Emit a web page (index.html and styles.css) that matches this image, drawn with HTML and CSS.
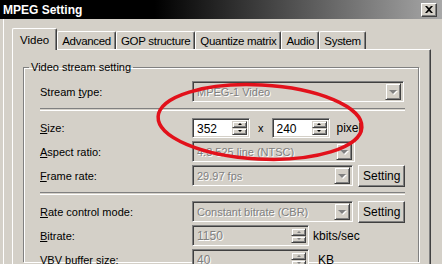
FILE: index.html
```html
<!DOCTYPE html>
<html lang="en">
<head>
    <meta charset="UTF-8">
    <title>MPEG Setting</title>
    <link rel="stylesheet" href="styles.css">
</head>
<body>
    <div class="titlebar">
        <span class="title">MPEG Setting</span>
        <div class="close">
            <svg width="8" height="7" viewBox="0 0 8 7"><path d="M0 0h2l2 2 2-2h2L5 3.5 8 7H6L4 5 2 7H0l3-3.5z" fill="#000"/></svg>
        </div>
    </div>

    <div class="client">
        <!-- tab strip -->
        <div class="tabs">
            <div class="tab active">Video</div>
            <div class="tab">Advanced</div>
            <div class="tab">GOP structure</div>
            <div class="tab">Quantize matrix</div>
            <div class="tab">Audio</div>
            <div class="tab">System</div>
        </div>

        <div class="panel">
            <fieldset class="group">
                <legend>Video stream setting</legend>
                <div class="group-body">
                    <div class="row">
                        <span class="lbl">Stream <u>t</u>ype:</span>
                        <div class="combo wide"><span class="value">MPEG-1 Video</span><span class="drop"><i class="arrow"></i></span></div>
                    </div>
                    <div class="sep"></div>
                    <div class="row">
                        <span class="lbl"><u>S</u>ize:</span>
                        <div class="spin size"><span class="value">352</span><span class="updown"><b><i class="up"></i></b><b><i class="down"></i></b></span></div>
                        <span class="times">x</span>
                        <div class="spin size"><span class="value">240</span><span class="updown"><b><i class="up"></i></b><b><i class="down"></i></b></span></div>
                        <span class="unit pixel">pixel</span>
                    </div>
                    <div class="row">
                        <span class="lbl"><u>A</u>spect ratio:</span>
                        <div class="combo"><span class="value">4:3 525 line (NTSC)</span><span class="drop"><i class="arrow"></i></span></div>
                    </div>
                    <div class="row">
                        <span class="lbl"><u>F</u>rame rate:</span>
                        <div class="combo"><span class="value">29.97 fps</span><span class="drop"><i class="arrow"></i></span></div>
                        <div class="btn">Setting</div>
                    </div>
                    <div class="sep"></div>
                    <div class="row">
                        <span class="lbl"><u>R</u>ate control mode:</span>
                        <div class="combo"><span class="value">Constant bitrate (CBR)</span><span class="drop"><i class="arrow"></i></span></div>
                        <div class="btn">Setting</div>
                    </div>
                    <div class="row">
                        <span class="lbl"><u>B</u>itrate:</span>
                        <div class="spin long disabled"><span class="value">1150</span><span class="updown"><b><i class="up"></i></b><b><i class="down"></i></b></span></div>
                        <span class="unit">kbits/sec</span>
                    </div>
                    <div class="row">
                        <span class="lbl"><u>V</u>BV buffer size:</span>
                        <div class="spin long disabled"><span class="value">40</span><span class="updown"><b><i class="up"></i></b><b><i class="down"></i></b></span></div>
                        <span class="unit kb">KB</span>
                    </div>
                </div>
            </fieldset>
        </div>
    </div>

    <!-- red hand-drawn mark over the size fields -->
    <svg class="mark" width="442" height="264" viewBox="0 0 442 264">
        <ellipse cx="260" cy="122" rx="102" ry="37" transform="rotate(3 260 122)" fill="none" stroke="#e2111b" stroke-width="3.5"/>
    </svg>
</body>
</html>
```

FILE: styles.css
```css
body {
    margin: 0;
    width: 442px;
    height: 264px;
    overflow: hidden;
    position: relative;
    background-color: #d4d0c8;
    font-family: "Liberation Sans", Arial, sans-serif;
    font-size: 11px;
    color: #000;
}

.titlebar {
    height: 19px;
    display: flex;
    align-items: center;
    justify-content: space-between;
    padding: 0 5px 0 3px;
    background: linear-gradient(to right, #000 35%, #a8a8a8);
    color: white;
    font-weight: bold;
    font-size: 12px;
}

.close {
    width: 16px;
    height: 14px;
    box-sizing: border-box;
    background-color: #d4d0c8;
    border: 1px solid;
    border-color: #fff #404040 #404040 #fff;
    box-shadow: inset -1px -1px #808080;
    display: flex;
    align-items: center;
    justify-content: center;
}

.client {
    margin-left: 3px;
    border-left: 1px solid #fff;
    padding: 9px 0 0 8px;
    height: 236px;
}

/* tabs */
.tabs {
    display: flex;
    align-items: flex-end;
    height: 21px;
}

.tab {
    height: 18px;
    box-sizing: border-box;
    padding: 0 4px;
    border: 1px solid;
    border-bottom: none;
    border-color: #fff #404040 #fff #fff;
    border-radius: 2px 2px 0 0;
    box-shadow: inset -1px 0 #808080;
    display: flex;
    align-items: center;
    font-size: 11.5px;
    letter-spacing: -0.3px;
}

.tab.active {
    height: 22px;
    margin-bottom: -1px;
    padding: 0 7px;
    position: relative;
    z-index: 1;
    background-color: #d4d0c8;
    letter-spacing: 0;
}

.panel {
    width: 419px;
    height: 220px;
    box-sizing: border-box;
    border: 1px solid;
    border-bottom: none;
    border-color: #fff #404040 #fff #fff;
    box-shadow: inset -1px 0 #808080;
    padding: 11px 11px 0 10px;
}

/* group box */
.group {
    margin: 0;
    padding: 0;
    min-width: 0;
    height: 200px;
    border: 1px solid #808080;
    border-bottom: none;
    box-shadow: inset 1px 1px #fff, 1px 1px #fff;
}

.group legend {
    margin-left: 5px;
    padding: 0 2px;
    line-height: 13px;
}

.group-body {
    padding: 6px 13px 0 16px;
    display: flex;
    flex-direction: column;
    gap: 1px;
}

.row {
    display: flex;
    align-items: center;
    height: 23px;
}

.lbl {
    width: 152px;
    flex: none;
}

.sep {
    margin: 4px 0;
    height: 1px;
    border-top: 1px solid #808080;
    border-bottom: 1px solid #fff;
}

/* combo boxes (all disabled) */
.combo {
    width: 163px;
    height: 21px;
    box-sizing: border-box;
    border: 1px solid;
    border-color: #808080 #fff #fff #808080;
    box-shadow: inset 1px 1px #404040, inset -1px -1px #d4d0c8;
    display: flex;
    align-items: center;
    padding: 0 2px 0 4px;
    color: #808080;
    text-shadow: 1px 1px #fff;
}

.combo.wide {
    width: 212px;
}

.value {
    flex: 1;
    white-space: nowrap;
    overflow: hidden;
}

.drop {
    width: 16px;
    height: 17px;
    box-sizing: border-box;
    border: 1px solid;
    border-color: #d4d0c8 #404040 #404040 #d4d0c8;
    box-shadow: inset 1px 1px #fff, inset -1px -1px #808080;
    display: flex;
    align-items: center;
    justify-content: center;
}

.arrow {
    border-top: 4px solid #808080;
    border-left: 4px solid transparent;
    border-right: 4px solid transparent;
    filter: drop-shadow(1px 1px 0 #fff);
}

/* spin edits */
.spin {
    height: 20px;
    box-sizing: border-box;
    border: 1px solid;
    border-color: #808080 #fff #fff #808080;
    box-shadow: inset 1px 1px #404040, inset -1px -1px #d4d0c8;
    background-color: white;
    display: flex;
    padding: 2px 2px 2px 4px;
    font-size: 12px;
    line-height: 16px;
}

.spin.size {
    width: 58px;
}

.spin.long {
    width: 117px;
    height: 21px;
    background-color: #d4d0c8;
    color: #808080;
    text-shadow: 1px 1px #fff;
}

.updown {
    width: 15px;
    display: flex;
    flex-direction: column;
}

.updown b {
    flex: 1;
    box-sizing: border-box;
    border: 1px solid;
    border-color: #d4d0c8 #404040 #404040 #d4d0c8;
    box-shadow: inset 1px 1px #fff, inset -1px -1px #808080;
    background-color: #d4d0c8;
    display: flex;
    align-items: center;
    justify-content: center;
}

.updown i {
    border-left: 2px solid transparent;
    border-right: 2px solid transparent;
}

.updown .up {
    border-bottom: 2px solid #000;
}

.updown .down {
    border-top: 2px solid #000;
}

.disabled .updown .up {
    border-bottom-color: #808080;
}

.disabled .updown .down {
    border-top-color: #808080;
}

.times {
    margin: 0 8px 0 8px;
}

.unit {
    margin-left: 4px;
    font-size: 12px;
}

.unit.pixel {
    margin-left: 7px;
}

.unit.kb {
    margin-left: 9px;
}

.btn {
    width: 47px;
    height: 22px;
    margin-left: 5px;
    box-sizing: border-box;
    border: 1px solid;
    border-color: #fff #404040 #404040 #fff;
    box-shadow: inset -1px -1px #808080;
    display: flex;
    align-items: center;
    justify-content: center;
    font-size: 12px;
}

.mark {
    position: absolute;
    top: 0;
    left: 0;
    pointer-events: none;
}
```
